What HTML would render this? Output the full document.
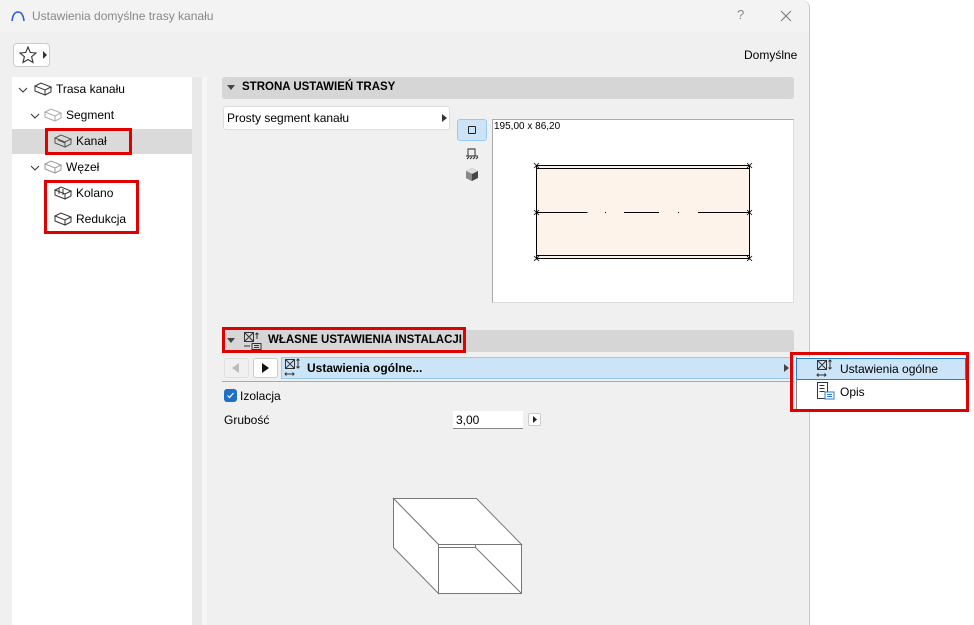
<!DOCTYPE html>
<html><head><meta charset="utf-8"><style>
*{margin:0;padding:0;box-sizing:border-box}
body{width:974px;height:625px;background:#fff;font-family:"Segoe UI","Liberation Sans",sans-serif;font-size:12px;color:#000;position:relative;overflow:hidden}
.a{position:absolute}
.red{position:absolute;border:3px solid #e00000}
.t{position:absolute;white-space:nowrap}
</style></head><body>
<div class="a" style="left:0;top:0;width:810px;height:625px;background:#f0f0f0;border-right:1px solid #c8c8c8;border-top-right-radius:8px"></div>
<div class="a" style="left:0;top:0;width:809px;height:32px;background:#f3f3f3;border-top-right-radius:8px"></div>
<svg class="a" style="left:10px;top:9px" width="16" height="14"><path d="M2 12 Q3 3 8 3 Q13 3 14 12" fill="none" stroke="#2a5bd7" stroke-width="1.6"/></svg>
<div class="t" style="left:32px;top:9px;font-size:12px;color:#888">Ustawienia domyślne trasy kanału</div>
<div class="t" style="left:737px;top:7px;font-size:13px;color:#888">?</div>
<svg class="a" style="left:780px;top:10px" width="12" height="12"><path d="M1 1L11 11M11 1L1 11" stroke="#777" stroke-width="1"/></svg>
<div class="a" style="left:13px;top:43px;width:37px;height:24px;background:#fff;border:1px solid #ccc;border-radius:4px"></div>
<svg class="a" style="left:18px;top:45px" width="20" height="20"><path d="M10 2L12.3 7.5 18 8 13.6 11.7 15 17.5 10 14.5 5 17.5 6.4 11.7 2 8 7.7 7.5Z" fill="none" stroke="#333" stroke-width="1.1"/></svg>
<svg class="a" style="left:42px;top:51px" width="6" height="8"><path d="M1 0L5 4 1 8Z" fill="#333"/></svg>
<div class="t" style="left:744px;top:48px">Domyślne</div>

<div class="a" style="left:12px;top:77px;width:180px;height:548px;background:#fff"></div>
<div class="a" style="left:192px;top:77px;width:10px;height:548px;background:#e9e9e9"></div>
<div class="a" style="left:202px;top:77px;width:5px;height:548px;background:#f6f6f6"></div>
<div class="a" style="left:12px;top:129px;width:180px;height:25px;background:#dadada"></div>
<svg class="a" style="left:0;top:77px" width="192" height="160" fill="none" stroke="#333" stroke-width="1">
<path d="M19 11l4 4 4-4M31 37l4 4 4-4M31 89l4 4 4-4"/>
<path d="M35 9l6-3 10 4-6 3zM35 9v5l10 4v-5M45 18l6-3v-5"/>
<path d="M45 35l6-3 10 4-6 3zM45 35v5l10 4v-5M55 44l6-3v-5" stroke="#aaa"/>
<path d="M55 61l6-3 10 4-6 3zM55 61v5l10 4v-5M65 70l6-3v-5M58 63l7 3" stroke="#555"/>
<path d="M45 87l6-3 10 4-6 3zM45 87v5l10 4v-5M55 96l6-3v-5" stroke="#999"/>
<path d="M55 113l6-3 10 4-6 3zM55 113v5l10 4v-5M65 122l6-3v-5M59 111v6M63 112v6" stroke="#333"/>
<path d="M55 139l6-3 10 4-6 3zM55 139v5l10 4v-5M65 148l6-3v-5" stroke="#333"/>
</svg>
<div class="t" style="left:56px;top:82px">Trasa kanału</div>
<div class="t" style="left:66px;top:108px">Segment</div>
<div class="t" style="left:76px;top:134px">Kanał</div>
<div class="t" style="left:66px;top:160px">Węzeł</div>
<div class="t" style="left:76px;top:186px">Kolano</div>
<div class="t" style="left:76px;top:212px">Redukcja</div>
<div class="red" style="left:45px;top:128px;width:87px;height:27px"></div>
<div class="red" style="left:44px;top:180px;width:95px;height:54px"></div>

<div class="a" style="left:222px;top:77px;width:572px;height:22px;background:#d6d6d6;border-radius:3px"></div>
<svg class="a" style="left:227px;top:85px" width="8" height="6"><path d="M0 0h8L4 5z" fill="#444"/></svg>
<div class="t" style="left:242px;top:81px;font-weight:bold;font-size:11.5px">STRONA USTAWIEŃ TRASY</div>
<div class="a" style="left:223px;top:106px;width:227px;height:24px;background:#fff;border:1px solid #ddd;border-radius:3px"></div>
<div class="t" style="left:227px;top:111px">Prosty segment kanału</div>
<svg class="a" style="left:442px;top:114px" width="5" height="8"><path d="M0 0L5 4 0 8Z" fill="#333"/></svg>
<div class="a" style="left:457px;top:119px;width:30px;height:22px;background:#cce4f7;border:1px solid #99c9ef;border-radius:3px"></div>
<div class="a" style="left:468px;top:126px;width:8px;height:8px;border:1px solid #222;border-radius:1px"></div>
<svg class="a" style="left:465px;top:148px" width="14" height="12" fill="none" stroke="#222"><path d="M3 1h7v7H3zM1 8h12M2 11l2-2M5 11l2-2M8 11l2-2M11 11l2-2" stroke-width="0.9"/></svg>
<svg class="a" style="left:465px;top:167px" width="14" height="15"><path d="M7 1l6 3v7l-6 3-6-3V4z" fill="#444"/><path d="M7 1l6 3-6 3-6-3z" fill="#ddd"/><path d="M1 4l6 3v7l-6-3z" fill="#888"/></svg>
<div class="a" style="left:492px;top:119px;width:302px;height:184px;background:#fff;border:1px solid #aaa;border-right-color:#ddd;border-bottom-color:#ddd"></div>
<div class="t" style="left:494px;top:121px;font-size:10px;font-family:'Liberation Sans',sans-serif">195,00 x 86,20</div>
<svg class="a" style="left:530px;top:160px" width="226" height="104" fill="none" stroke="#000" stroke-width="1">
<rect x="6.5" y="5.5" width="213" height="93" fill="#fdf3ea"/>
<path d="M6.5 8.5h213M6.5 95.5h213M6.5 52.5h51M75 52.5h1M94 52.5h35M148 52.5h1M168 52.5h51.5"/>
<path d="M4 3l5 5M9 3l-5 5M217 3l5 5M222 3l-5 5M4 50l5 5M9 50l-5 5M217 50l5 5M222 50l-5 5M4 96l5 5M9 96l-5 5M217 96l5 5M222 96l-5 5" stroke-width="0.8"/>
</svg>

<div class="a" style="left:222px;top:330px;width:572px;height:22px;background:#d6d6d6;border-radius:3px"></div>
<svg class="a" style="left:227px;top:338px" width="8" height="6"><path d="M0 0h8L4 5z" fill="#444"/></svg>
<svg class="a" style="left:243px;top:331px" width="20" height="20" fill="none" stroke="#333" stroke-width="1"><path d="M1.5 1.5h9v9h-9zM2 2l8 8M10 2l-8 8M14 2v6M12.5 3.5l1.5-1.5 1.5 1.5M9 12.5h9v6H9zM11 14.5h5M11 16.5h5M1 15h6"/></svg>
<div class="t" style="left:268px;top:334px;font-weight:bold;font-size:11.5px">WŁASNE USTAWIENIA INSTALACJI</div>
<div class="red" style="left:222px;top:327px;width:244px;height:26px"></div>
<div class="a" style="left:224px;top:358px;width:25px;height:20px;background:#f0f0f0;border:1px solid #e0e0e0;border-radius:3px"></div>
<svg class="a" style="left:232px;top:363px" width="7" height="10"><path d="M7 0L0 5 7 10Z" fill="#bbb"/></svg>
<div class="a" style="left:253px;top:358px;width:25px;height:20px;background:#fff;border:1px solid #ccc;border-radius:3px"></div>
<svg class="a" style="left:262px;top:363px" width="7" height="10"><path d="M0 0L7 5 0 10Z" fill="#111"/></svg>
<div class="a" style="left:281px;top:357px;width:513px;height:22px;background:#cce4f7;border:1px solid #99c9ef;border-right:none"></div>
<svg class="a" style="left:284px;top:358px" width="20" height="20" fill="none" stroke="#333" stroke-width="1"><path d="M1.5 1.5h9v9h-9zM2 2l8 8M10 2l-8 8M14 1v9M12.5 2.5l1.5-1.5 1.5 1.5M12.5 8.5l1.5 1.5 1.5-1.5M1 16h9M2.5 14.5L1 16l1.5 1.5M8.5 14.5L10 16l-1.5 1.5"/></svg>
<div class="t" style="left:307px;top:361px;font-weight:bold">Ustawienia ogólne...</div>
<svg class="a" style="left:784px;top:364px" width="5" height="8"><path d="M0 0L5 4 0 8Z" fill="#444"/></svg>
<div class="a" style="left:222px;top:381px;width:572px;height:1px;background:#aaa"></div>
<div class="a" style="left:224px;top:389px;width:13px;height:13px;background:#1d6fc8;border-radius:3px"></div>
<svg class="a" style="left:226px;top:391px" width="9" height="9"><path d="M1.5 4.5l2 2 4-4.5" fill="none" stroke="#fff" stroke-width="1.2"/></svg>
<div class="t" style="left:240px;top:389px">Izolacja</div>
<div class="t" style="left:224px;top:413px">Grubość</div>
<div class="a" style="left:453px;top:411px;width:70px;height:18px;background:#fff;border-bottom:1px solid #888"></div>
<div class="t" style="left:456px;top:413px">3,00</div>
<div class="a" style="left:528px;top:413px;width:13px;height:13px;background:#fff;border:1px solid #ccc;border-radius:2px"></div>
<svg class="a" style="left:533px;top:416px" width="4" height="7"><path d="M0 0L4 3.5 0 7Z" fill="#222"/></svg>

<svg class="a" style="left:390px;top:495px" width="135" height="102" fill="#fff" stroke="#777" stroke-width="1">
<path d="M3.5 3.5h83l45 46h-83z"/>
<path d="M3.5 3.5l45 46v49l-45-46z"/>
<rect x="48.5" y="49.5" width="83" height="49"/>
<path d="M48.5 52.5h37M85.5 49.5v3l46 46" fill="none"/>
</svg>

<div class="a" style="left:796px;top:357px;width:170px;height:52px;background:#fff;border-left:1px solid #888"></div>
<div class="a" style="left:796px;top:358px;width:170px;height:22px;background:#cce4f7;border:1px solid #2b7bd0"></div>
<svg class="a" style="left:816px;top:359px" width="20" height="20" fill="none" stroke="#333" stroke-width="1"><path d="M1.5 1.5h9v9h-9zM2 2l8 8M10 2l-8 8M14 1v9M12.5 2.5l1.5-1.5 1.5 1.5M12.5 8.5l1.5 1.5 1.5-1.5M1 16h9M2.5 14.5L1 16l1.5 1.5M8.5 14.5L10 16l-1.5 1.5"/></svg>
<div class="t" style="left:840px;top:362px">Ustawienia ogólne</div>
<svg class="a" style="left:816px;top:381px" width="20" height="20" fill="none" stroke="#333" stroke-width="1"><path d="M1.5 1.5h10v16h-10zM3.5 4.5h5M3.5 7.5h5M3.5 10.5h5"/><rect x="9" y="11" width="9" height="7" fill="#fff" stroke="#2b7bd0"/><path d="M11 13.5h5M11 15.5h5" stroke="#2b7bd0"/></svg>
<div class="t" style="left:840px;top:385px">Opis</div>
<div class="red" style="left:790px;top:352px;width:179px;height:60px"></div>
</body></html>
